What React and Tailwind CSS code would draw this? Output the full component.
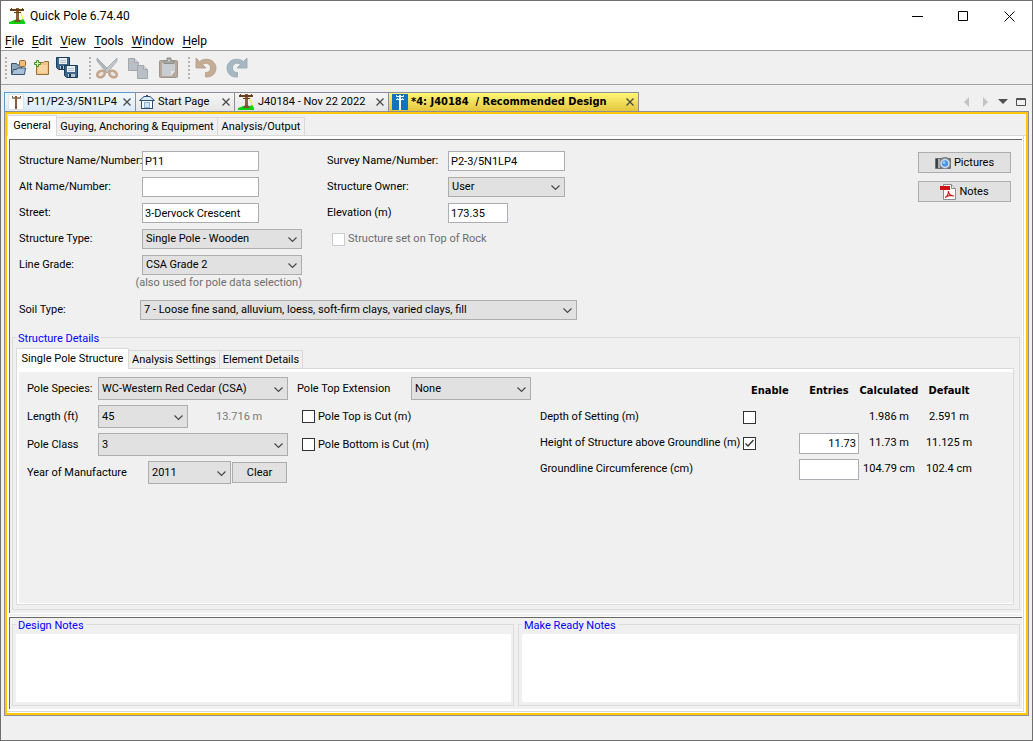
import { useState } from 'react';
import clsx from 'clsx';

/* ---------- icons ---------- */

function PoleIcon() {
    return (
        <svg width="17" height="18" viewBox="0 0 17 18" className="shrink-0">
            <path d="M11 4l4 10" stroke="#f2ee2a" strokeWidth="1" />
            <path d="M0 17v-2l3-1 2-1h7l2-1 2 3v2z" fill="#0ccf10" />
            <rect x="7" y="1" width="3" height="14" fill="#8a6242" />
            <path d="M5 15l2-3h3l2 3z" fill="#7a5233" />
            <rect x="1" y="2" width="14" height="2" fill="#6b3f1d" />
            <path d="M2.500 1v1M13.500 1v1M5 5.500h7" stroke="#6b3f1d" />
        </svg>
    );
}

function SmallPoleIcon() {
    return (
        <svg width="16" height="16" viewBox="0 0 16 16" className="shrink-0">
            <rect x=".5" y=".5" width="15" height="15" fill="#fff" stroke="#e2e2e2" />
            <path d="M4.500 2v1M12.500 2v1" stroke="#555" />
            <rect x="4" y="3" width="9" height="2" fill="#a48b77" />
            <rect x="7" y="2" width="2" height="13" fill="#8a5d41" />
        </svg>
    );
}

function BluePoleIcon() {
    return (
        <svg width="16" height="16" viewBox="0 0 16 16" className="shrink-0">
            <rect width="16" height="16" fill="#1173bd" />
            <path d="M4 2.500h8M4 5.500h8" stroke="#fff" />
            <path d="M4.500 1v2M11.500 1v2M5.500 4v2M10.500 4v2" stroke="#cfe4f5" />
            <rect x="7" y="1" width="2" height="15" fill="#fff" />
        </svg>
    );
}

function HouseIcon() {
    return (
        <svg width="16" height="16" viewBox="0 0 16 16" className="shrink-0">
            <rect x="2.500" y="6.500" width="11" height="8" fill="#fff" stroke="#2d4f78" />
            <path d="M.5 6.500L5 2.500h6l4.500 4z" fill="#dbeaf5" stroke="#2d4f78" />
            <path d="M7 1.500h2" stroke="#2d4f78" />
            <rect x="5.500" y="8.500" width="5" height="5" fill="#d3e5f2" stroke="#8eb2d0" />
        </svg>
    );
}

function OpenIcon() {
    return (
        <svg width="17" height="17" viewBox="0 0 17 17">
            <path d="M1.500 14.500V4.500h5l1 1.500h4v8z" fill="#8ea6bb" stroke="#36536e" />
            <rect x="9.500" y="1.500" width="6" height="6" rx="1" fill="#efbd77" stroke="#94693a" />
            <path d="M1.500 15.500l2-5h3l1-1.500h8l-1 6.500z" fill="#a9c2d8" stroke="#36536e" />
        </svg>
    );
}

function NewIcon() {
    return (
        <svg width="17" height="17" viewBox="0 0 17 17">
            <path d="M3.500 15.500v-12h7l1-1h4v13z" fill="#f0c486" stroke="#9c6f38" />
            <path d="M5 14h9V6H5z" fill="#f6d3a0" />
            <path d="M3.500 1.500h2v2h2v2h-2v2h-2v-2h-2v-2h2z" fill="#d7f5b4" stroke="#3f8d20" />
        </svg>
    );
}

function Floppy({ x, y }) {
    return (
        <g transform={`translate(${x} ${y})`}>
            <path d="M.5.5h13v12h-11l-2-2z" fill="#3f678c" stroke="#1b3b58" />
            <rect x="3" y="1" width="8" height="6" fill="#e9f0f5" />
            <path d="M4 3.500h6M4 5.500h6" stroke="#b3c2cf" />
            <rect x="4" y="9" width="7" height="3" fill="#b8c5d0" />
            <rect x="5" y="9" width="2" height="3" fill="#1b3b58" />
        </g>
    );
}

function SaveAllIcon() {
    return (
        <svg width="23" height="23" viewBox="0 0 23 23">
            <Floppy x={0} y={1} />
            <Floppy x={8} y={9} />
        </svg>
    );
}

function CutIcon() {
    return (
        <svg width="24" height="22" viewBox="0 0 24 22">
            <path d="M2 1l12 12-2 3L2 4z" fill="#b3b6b9" stroke="#999da0" strokeWidth=".7" />
            <path d="M22 1L10 13l2 3L22 4z" fill="#c3c6c9" stroke="#999da0" strokeWidth=".7" />
            <ellipse cx="6" cy="17" rx="4" ry="3" fill="#e9e4df" stroke="#c3a68c" strokeWidth="2.500" transform="rotate(-30 6 17)" />
            <ellipse cx="18" cy="17" rx="4" ry="3" fill="#e9e4df" stroke="#c3a68c" strokeWidth="2.500" transform="rotate(30 18 17)" />
        </svg>
    );
}

function CopyIcon() {
    return (
        <svg width="22" height="22" viewBox="0 0 22 22" fill="#b9bfc4" stroke="#a2a8ad">
            <path d="M1.500 1.500h6l4 4v8h-10z" />
            <path d="M7.500 1.500v4h4" fill="#d3d7da" />
            <path d="M10.500 8.500h6l4 4v9h-10z" />
            <path d="M16.500 8.500v4h4" fill="#d3d7da" />
        </svg>
    );
}

function PasteIcon() {
    return (
        <svg width="21" height="22" viewBox="0 0 21 22">
            <rect x="1.500" y="3.500" width="18" height="17" rx="1" fill="#b5aa9d" stroke="#9f978d" />
            <path d="M4 6h13v8l-4 5H4z" fill="#c9cdd0" />
            <path d="M17 14h-4v5z" fill="#e3e6e8" />
            <path d="M6 6.500V4h3V1h4v3h3v2.500z" fill="#a9a9a5" stroke="#8f908d" />
            <path d="M10 3.500h2" stroke="#d9d9d6" />
        </svg>
    );
}

function UndoIcon() {
    return (
        <svg width="22" height="22" viewBox="0 0 22 22">
            <path
                d="M1 1v10h10L7.500 7.500C11 5 15.500 6.500 15.500 11c0 3-2 4.500-5 4.500V20C17 20.500 21 16.500 21 11 21 3 11-.5 4.500 4.500z"
                fill="#c5ac94"
                stroke="#b39b86"
                strokeWidth=".8"
            />
        </svg>
    );
}

function RedoIcon() {
    return (
        <svg width="22" height="22" viewBox="0 0 22 22">
            <path
                d="M21 1v10H11l3.500-3.500C11 5 6.500 6.500 6.500 11c0 3 2 4.500 5 4.500V20C5 20.500 1 16.500 1 11 1 3 11-.5 17.500 4.500z"
                fill="#a7b8c3"
                stroke="#93a6b3"
                strokeWidth=".8"
            />
        </svg>
    );
}

function CameraIcon() {
    return (
        <svg width="16" height="14" viewBox="0 0 16 14">
            <rect x="0" y="2" width="16" height="11" rx="1" fill="#6f7275" />
            <rect x="1" y="3" width="3" height="9" fill="#3d3f41" />
            <rect x="3" y="3" width="2" height="9" fill="#aeb1b4" />
            <path d="M7 2l1-1h4l1 1z" fill="#85898c" />
            <circle cx="10" cy="7.500" r="5" fill="#d7e2ec" stroke="#8794a1" strokeWidth=".8" />
            <circle cx="10" cy="7.500" r="3.200" fill="#4b95ea" />
            <circle cx="9" cy="6.500" r="1.200" fill="#a9d2ff" />
        </svg>
    );
}

function PdfIcon() {
    return (
        <svg width="16" height="16" viewBox="0 0 16 16">
            <path d="M3.500.5h8l4 4v11h-12z" fill="#fff" stroke="#8d8d8d" />
            <path d="M11.500.5v4h4" fill="#e5e5e5" stroke="#8d8d8d" />
            <rect x="0" y="2" width="10" height="4" fill="#cc1417" />
            <path d="M5 13.500c2-1 3.500-4 3.500-6.500 0 3 2 5 5.500 5-3-1-6-.5-9 1.500z" fill="none" stroke="#d3191c" strokeWidth="1.200" />
        </svg>
    );
}

function CloseX() {
    return (
        <svg width="8" height="8" viewBox="0 0 8 8" stroke="#4a4a4a" strokeWidth="1.300">
            <path d="M.5.5l7 7M7.500.5l-7 7" />
        </svg>
    );
}

/* ---------- form controls ---------- */

function TextBox({ className, ...props }) {
    return (
        <input
            type="text"
            className={clsx('border border-[#abadb3] bg-white px-[2px] outline-none focus:border-[#0078d7]', className)}
            {...props}
        />
    );
}

function Select({ id, value, className }) {
    return (
        <div className={clsx('relative', className)}>
            <select
                id={id}
                defaultValue={value}
                className="block h-full w-full appearance-none border border-[#adadad] bg-[#e1e1e1] pr-5 pl-[3px] outline-none"
            >
                <option>{value}</option>
            </select>
            <svg
                width="9"
                height="6"
                viewBox="0 0 9 6"
                className="pointer-events-none absolute top-1/2 right-[5px] -translate-y-1/3"
                fill="none"
                stroke="#484848"
                strokeWidth="1.200"
            >
                <path d="M.5.5l4 4 4-4" />
            </svg>
        </div>
    );
}

function CheckBox({ disabled, ...props }) {
    return (
        <span className="relative block size-[13px] shrink-0">
            <input
                type="checkbox"
                disabled={disabled}
                className="peer block size-[13px] appearance-none border border-[#333] bg-white disabled:border-[#ccc]"
                {...props}
            />
            <svg
                width="13"
                height="13"
                viewBox="0 0 13 13"
                className="pointer-events-none absolute inset-0 hidden peer-checked:block"
                fill="none"
                stroke="#333"
                strokeWidth="1.300"
            >
                <path d="M2.500 6.500L5 9l5.500-6" />
            </svg>
        </span>
    );
}

function PushButton({ className, children }) {
    return (
        <button
            type="button"
            className={clsx('flex h-[21px] items-center justify-center gap-[3px] border border-[#adadad] bg-[#e1e1e1] hover:border-[#0078d7] hover:bg-[#e5f1fb]', className)}
        >
            {children}
        </button>
    );
}

function TabStrip({ tabs, active, onChange }) {
    return (
        <div role="tablist" className="flex items-end border-b border-[#d9d9d9] pt-px">
            {tabs.map((tab) => (
                <button
                    key={tab.label}
                    type="button"
                    role="tab"
                    aria-selected={active === tab.label}
                    onClick={() => onChange(tab.label)}
                    className={clsx(
                        'flex shrink-0 items-center justify-center border-t border-r border-[#d9d9d9] whitespace-nowrap',
                        active === tab.label ? '-mb-px h-[21px] border-l bg-white' : 'h-[18px] bg-[#f0f0f0] pt-px',
                        tab.width
                    )}
                >
                    {tab.label}
                </button>
            ))}
        </div>
    );
}

function GroupBox({ title, className, children }) {
    return (
        <div role="group" className={clsx('flex min-w-0 flex-1 flex-col border border-[#dcdcdc] pl-[3px]', className)}>
            <div className="-mt-[6px] w-fit bg-[#f0f0f0] px-[2px] text-[#0000ff]">{title}</div>
            {children}
        </div>
    );
}

/* ---------- window parts ---------- */

const menus = ['File', 'Edit', 'View', 'Tools', 'Window', 'Help'];

const documents = [
    { label: 'P11/P2-3/5N1LP4', icon: SmallPoleIcon, look: 'w-[131px] border-[#5a9bd0] bg-linear-to-b from-[#f2f8fd] to-[#dcebf8]' },
    { label: 'Start Page', icon: HouseIcon, look: 'w-[99px] border-[#8c8f98] bg-linear-to-b from-[#f5f5f5] to-[#e6e6e6]' },
    { label: 'J40184 - Nov 22 2022', icon: PoleIcon, look: 'w-[154px] border-[#8c8f98] bg-linear-to-b from-[#f5f5f5] to-[#e6e6e6]' },
    { label: '*4: J40184  / Recommended Design', icon: BluePoleIcon, look: "w-[251px] border-r border-[#8c8f98] bg-linear-to-b from-[#fff775] to-[#e4c63e] font-['DejaVu_Sans_Condensed',sans-serif] font-bold" },
];

const toolGroups = [
    {
        gap: 'mr-2',
        tools: [
            { name: 'Open', icon: OpenIcon, width: 'w-[23px]' },
            { name: 'New', icon: NewIcon, width: 'w-[23px]' },
            { name: 'Save All', icon: SaveAllIcon, width: 'w-[28px]' },
        ],
    },
    {
        gap: 'mr-1',
        tools: [
            { name: 'Cut', icon: CutIcon, width: 'w-[31px]' },
            { name: 'Copy', icon: CopyIcon, width: 'w-[31px]' },
            { name: 'Paste', icon: PasteIcon, width: 'w-[31px]' },
        ],
    },
    {
        gap: 'mr-1',
        tools: [
            { name: 'Undo', icon: UndoIcon, width: 'w-[31px]' },
            { name: 'Redo', icon: RedoIcon, width: 'w-[31px]' },
        ],
    },
];

const mainTabs = [
    { label: 'General', width: 'w-[50px]' },
    { label: 'Guying, Anchoring & Equipment', width: 'w-[161px]' },
    { label: 'Analysis/Output', width: 'w-[87px]' },
];

const detailTabs = [
    { label: 'Single Pole Structure', width: 'w-[113px]' },
    { label: 'Analysis Settings', width: 'w-[91px]' },
    { label: 'Element Details', width: 'w-[83px]' },
];

function TitleBar() {
    return (
        <header className="flex h-[30px] items-center bg-white pr-[17px] pl-2 text-xs">
            <PoleIcon />
            <h1 className="ml-1">Quick Pole 6.74.40</h1>
            <div className="ml-auto flex items-center gap-[35px]">
                <button type="button" aria-label="Minimize">
                    <svg width="11" height="11" stroke="#000"><path d="M0 5.500h11" /></svg>
                </button>
                <button type="button" aria-label="Maximize">
                    <svg width="11" height="11" stroke="#000" fill="none"><path d="M.5.5h9v9h-9z" /></svg>
                </button>
                <button type="button" aria-label="Close">
                    <svg width="11" height="11" stroke="#000"><path d="M.5.5l10 10M10.500.5l-10 10" /></svg>
                </button>
            </div>
        </header>
    );
}

function MenuBar() {
    return (
        <nav className="flex h-[19px] items-center gap-2 bg-white pl-1 text-xs">
            {menus.map((menu) => (
                <button key={menu} type="button">
                    <span className="underline underline-offset-2">{menu[0]}</span>
                    {menu.slice(1)}
                </button>
            ))}
        </nav>
    );
}

function ToolBar() {
    return (
        <div className="flex h-[35px] items-center border-t border-b border-[#a0a0a0] pl-1">
            {toolGroups.map((group, i) => (
                <div key={i} className={clsx('flex items-center', group.gap)}>
                    <div className="h-[22px] w-0 border-l-2 border-dotted border-[#b4b4b4]"></div>
                    {group.tools.map((tool) => (
                        <button
                            key={tool.name}
                            type="button"
                            aria-label={tool.name}
                            className={clsx('flex h-7 items-center justify-center', tool.width)}
                        >
                            <tool.icon />
                        </button>
                    ))}
                </div>
            ))}
        </div>
    );
}

function DocumentTabs() {
    return (
        <div className="flex h-[19px] items-stretch pl-[3px]">
            {documents.map((doc) => (
                <div key={doc.label} className={clsx('flex shrink-0 items-center border-t border-l pr-1 pl-[3px]', doc.look)}>
                    <doc.icon />
                    <button type="button" className="ml-[3px] whitespace-pre">{doc.label}</button>
                    <button type="button" aria-label={`Close ${doc.label}`} className="ml-auto">
                        <CloseX />
                    </button>
                </div>
            ))}
            <div className="ml-auto flex items-center gap-2 pr-[6px]">
                <button type="button" aria-label="Scroll left">
                    <svg width="10" height="10" fill="#c3c3c3"><path d="M7 0v10L2 5z" /></svg>
                </button>
                <button type="button" aria-label="Scroll right">
                    <svg width="10" height="10" fill="#c3c3c3"><path d="M3 0v10l5-5z" /></svg>
                </button>
                <button type="button" aria-label="Show list">
                    <svg width="10" height="10" fill="#505050"><path d="M0 2h10L5 7z" /></svg>
                </button>
                <button type="button" aria-label="Maximize editor">
                    <svg width="10" height="10" fill="none" stroke="#505050"><path d="M.5 1.500h9v7h-9zM0 2.500h10" /></svg>
                </button>
            </div>
        </div>
    );
}

function GeneralForm() {
    return (
        <>
            <div className="flex items-start pt-[11px] pr-[11px] pl-[9px]">
                <div>
                    <div className="grid grid-cols-[123px_160px] auto-rows-[20px] items-center gap-y-[6px]">
                        <label htmlFor="structure-name" className="whitespace-nowrap">Structure Name/Number:</label>
                        <TextBox id="structure-name" defaultValue="P11" className="h-5 w-[117px]" />
                        <label htmlFor="alt-name">Alt Name/Number:</label>
                        <TextBox id="alt-name" className="h-5 w-[117px]" />
                        <label htmlFor="street">Street:</label>
                        <TextBox id="street" defaultValue="3-Dervock Crescent" className="h-5 w-[117px]" />
                        <label htmlFor="structure-type">Structure Type:</label>
                        <Select id="structure-type" value="Single Pole - Wooden" className="h-5" />
                        <label htmlFor="line-grade">Line Grade:</label>
                        <Select id="line-grade" value="CSA Grade 2" className="h-5" />
                    </div>
                    <p className="mt-px text-right text-[#6d6d6d]">(also used for pole data selection)</p>
                </div>
                <div className="ml-[25px] grid grid-cols-[121px_117px] auto-rows-[20px] items-center gap-y-[6px]">
                    <label htmlFor="survey-name">Survey Name/Number:</label>
                    <TextBox id="survey-name" defaultValue="P2-3/5N1LP4" className="h-5" />
                    <label htmlFor="owner">Structure Owner:</label>
                    <Select id="owner" value="User" className="h-5" />
                    <label htmlFor="elevation">Elevation (m)</label>
                    <TextBox id="elevation" defaultValue="173.35" className="h-5 w-[60px]" />
                    <label className="col-span-2 flex items-center gap-[3px] pl-[5px] text-[#6d6d6d]">
                        <CheckBox disabled />
                        Structure set on Top of Rock
                    </label>
                </div>
                <div className="ml-auto flex w-[93px] flex-col gap-2 pt-px">
                    <PushButton><CameraIcon />Pictures</PushButton>
                    <PushButton><PdfIcon />Notes</PushButton>
                </div>
            </div>
            <div className="mt-[10px] flex items-center pl-[9px]">
                <label htmlFor="soil-type" className="w-[121px]">Soil Type:</label>
                <Select id="soil-type" value="7 - Loose fine sand, alluvium, loess, soft-firm clays, varied clays, fill" className="h-5 w-[437px]" />
            </div>
        </>
    );
}

const settings = [
    { label: 'Depth of Setting (m)', enable: true, checked: false, calculated: '1.986 m', standard: '2.591 m' },
    { label: 'Height of Structure above Groundline (m)', enable: true, checked: true, entry: '11.73', calculated: '11.73 m', standard: '11.125 m' },
    { label: 'Groundline Circumference (cm)', enable: false, entry: '', calculated: '104.79 cm', standard: '102.4 cm' },
];

function SettingsTable() {
    return (
        <table className="mt-px w-[439px] table-fixed border-collapse self-start text-center">
            <colgroup>
                <col className="w-[203px]" />
                <col className="w-[56px]" />
                <col className="w-[60px]" />
                <col className="w-[60px]" />
                <col className="w-[60px]" />
            </colgroup>
            <thead className="font-['DejaVu_Sans_Condensed',sans-serif]">
                <tr className="h-[26px]">
                    <td className="p-0"></td>
                    <th className="p-0 pl-2 text-left">Enable</th>
                    <th className="p-0">Entries</th>
                    <th className="p-0">Calculated</th>
                    <th className="p-0">Default</th>
                </tr>
            </thead>
            <tbody>
                {settings.map((row) => (
                    <tr key={row.label} className="h-[26px]">
                        <td className="p-0 text-left whitespace-nowrap">{row.label}</td>
                        <td className="p-0">{row.enable && <CheckBox defaultChecked={row.checked} aria-label={`Enable ${row.label}`} />}</td>
                        <td className="p-0">
                            {row.entry !== undefined && (
                                <TextBox defaultValue={row.entry} aria-label={row.label} className="block h-[21px] w-[60px] text-right" />
                            )}
                        </td>
                        <td className="p-0 whitespace-nowrap">{row.calculated}</td>
                        <td className="p-0 whitespace-nowrap">{row.standard}</td>
                    </tr>
                ))}
            </tbody>
        </table>
    );
}

function PoleForm() {
    return (
        <div className="flex flex-1 gap-[9px] pt-[5px] pl-2">
            <div className="flex w-[261px] flex-col gap-[5px]">
                <div className="flex h-[23px] items-center">
                    <label htmlFor="species" className="w-[71px]">Pole Species:</label>
                    <Select id="species" value="WC-Western Red Cedar (CSA)" className="h-full w-[190px]" />
                </div>
                <div className="flex h-[23px] items-center">
                    <label htmlFor="length" className="w-[71px]">Length (ft)</label>
                    <Select id="length" value="45" className="h-full w-[90px]" />
                    <span className="ml-7 text-[#7a7a7a]">13.716 m</span>
                </div>
                <div className="flex h-[23px] items-center">
                    <label htmlFor="pole-class" className="w-[71px]">Pole Class</label>
                    <Select id="pole-class" value="3" className="h-full w-[190px]" />
                </div>
                <div className="flex h-[23px] items-center">
                    <label htmlFor="year" className="w-[121px]">Year of Manufacture</label>
                    <Select id="year" value="2011" className="h-full w-[83px]" />
                    <PushButton className="ml-px w-[55px]">Clear</PushButton>
                </div>
            </div>
            <div className="flex w-[234px] flex-col gap-[5px]">
                <div className="flex h-[23px] items-center">
                    <label htmlFor="extension" className="w-[114px]">Pole Top Extension</label>
                    <Select id="extension" value="None" className="h-full w-[120px]" />
                </div>
                <label className="flex h-[23px] items-center gap-[3px] pl-[5px]">
                    <CheckBox />
                    Pole Top is Cut (m)
                </label>
                <label className="flex h-[23px] items-center gap-[3px] pl-[5px]">
                    <CheckBox />
                    Pole Bottom is Cut (m)
                </label>
            </div>
            <SettingsTable />
        </div>
    );
}

function NotesBox({ title, id }) {
    return (
        <GroupBox title={<label htmlFor={id}>{title}</label>} className="pr-[2px] pb-[3px]">
            <textarea id={id} className="mt-px block h-[68px] w-full resize-none bg-white p-1 outline-none"></textarea>
        </GroupBox>
    );
}

export default function App() {
    const [mainTab, setMainTab] = useState('General');
    const [detailTab, setDetailTab] = useState('Single Pole Structure');

    return (
        <div className="flex min-h-screen flex-col border border-[#6f6f6f] bg-[#f0f0f0] font-['Roboto',sans-serif] text-[11px] leading-[14px] text-black">
            <TitleBar />
            <MenuBar />
            <ToolBar />
            <div className="mt-[7px] flex flex-1 flex-col">
                <DocumentTabs />
                {/* Yellow frame of the active editor */}
                <main className="mr-[3px] ml-[3px] flex flex-1 flex-col border border-[#8c8f98]">
                    <div className="flex flex-1 flex-col border-2 border-[#ffc800]">
                        <TabStrip tabs={mainTabs} active={mainTab} onChange={setMainTab} />
                        <div className="flex flex-1 flex-col border-r-2 border-b border-white">
                            <div className="flex flex-1 flex-col border-r border-b border-[#dadada]">
                                <div className="flex flex-1 flex-col border-t-3 border-r border-b-2 border-l-2 border-white">
                                    <section className="flex flex-1 flex-col border-t border-l border-[#696969] pb-[3px]">
                                        <GeneralForm />
                                        <div className="mx-[2px] mt-[17px] flex flex-1 flex-col">
                                            <GroupBox title="Structure Details" className="pr-[5px] pb-1">
                                                <div className="mt-px flex flex-1 flex-col">
                                                    <TabStrip tabs={detailTabs} active={detailTab} onChange={setDetailTab} />
                                                    <div className="flex flex-1 flex-col border-r border-b border-l border-[#dcdcdc]">
                                                        <div className="flex flex-1 flex-col border-t-3 border-b border-l-2 border-white">
                                                            <PoleForm />
                                                        </div>
                                                    </div>
                                                </div>
                                            </GroupBox>
                                        </div>
                                    </section>
                                    <div className="h-1 border-t border-b border-white"></div>
                                    <section className="flex gap-1 border-t border-l border-[#696969] px-[2px] pt-[6px] pb-[3px]">
                                        <NotesBox title="Design Notes" id="design-notes" />
                                        <NotesBox title="Make Ready Notes" id="make-ready-notes" />
                                    </section>
                                </div>
                            </div>
                        </div>
                    </div>
                </main>
            </div>
            <footer className="h-6"></footer>
        </div>
    );
}
